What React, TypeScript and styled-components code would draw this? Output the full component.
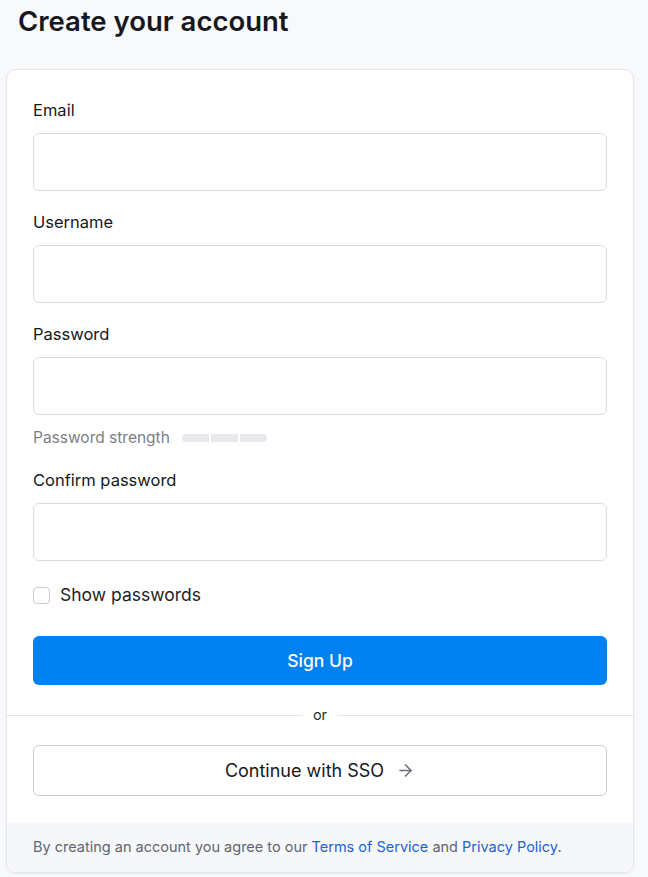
import React, { useState } from "react";
import styled, { createGlobalStyle } from "styled-components";

const GlobalStyle = createGlobalStyle`
  html, body {
    margin: 0;
    padding: 0;
    background: #f8f9fb;
    font-family: Inter, "Noto Sans", "Liberation Sans", sans-serif;
    color: #16181d;
  }
  * {
    box-sizing: border-box;
  }
`;

const Page = styled.div`
  padding: 3px 14px 6px 6px;
`;

const Title = styled.h1`
  margin: 0 0 30px 12px;
  font-size: 27.5px;
  line-height: 36px;
  font-weight: 600;
  color: #16181d;
`;

const Card = styled.div`
  background: #fff;
  border: 1px solid #e4e6ea;
  border-radius: 10px;
  box-shadow: 0 1px 3px rgba(16, 24, 40, 0.06);
  overflow: hidden;
`;

const Form = styled.form`
  display: flex;
  flex-direction: column;
  padding: 28px 26px 0 26px;
`;

const Field = styled.div`
  display: flex;
  flex-direction: column;
  margin-bottom: 19px;
`;

const Label = styled.label`
  font-size: 16.5px;
  line-height: 24px;
  font-weight: 400;
  color: #16181d;
  margin-bottom: 11px;
`;

const Input = styled.input`
  height: 58px;
  width: 100%;
  border: 1px solid #d8dbe0;
  border-radius: 6px;
  padding: 0 14px;
  font-size: 16px;
  font-family: inherit;
  background: #fff;
  outline: none;
`;

const Strength = styled.div`
  display: flex;
  align-items: center;
  gap: 12px;
  margin: 13px 0 1px;
  font-size: 15.5px;
  line-height: 20px;
  color: #7a8089;
`;

const Bars = styled.div`
  display: flex;
  gap: 2px;
  border-radius: 4px;
  overflow: hidden;
`;

const Bar = styled.span`
  width: 27px;
  height: 8px;
  background: #e6e8eb;
`;

const CheckRow = styled.label`
  display: flex;
  align-items: center;
  gap: 10px;
  margin-top: 4px;
  font-size: 17.5px;
  line-height: 22px;
  color: #1f2228;
  cursor: pointer;
`;

const Box = styled.span<{ $on: boolean }>`
  width: 17px;
  height: 17px;
  border: 1px solid #c6cad0;
  border-radius: 4px;
  background: ${(p) => (p.$on ? "#0081f1" : "#fff")};
`;

const Primary = styled.button`
  margin-top: 30px;
  height: 49px;
  border: none;
  border-radius: 6px;
  background: #0081f1;
  color: #fff;
  font-family: inherit;
  font-size: 17.5px;
  font-weight: 500;
  cursor: pointer;
`;

const Divider = styled.div`
  display: flex;
  align-items: center;
  gap: 10px;
  margin: 20px 0 20px 0;
  font-size: 14.5px;
  line-height: 20px;
  color: #2a2d33;

  &::before,
  &::after {
    content: "";
    flex: 1;
    height: 1px;
    background: #e2e4e8;
  }
`;

const SsoWrap = styled.div`
  padding: 0 26px 27px;
`;

const Secondary = styled.button`
  width: 100%;
  height: 51px;
  border: 1px solid #c9cdd3;
  border-radius: 6px;
  background: #fff;
  color: #16181d;
  font-family: inherit;
  font-size: 18px;
  font-weight: 400;
  display: flex;
  align-items: center;
  justify-content: center;
  gap: 12px;
  cursor: pointer;
`;

const Footer = styled.div`
  background: #f6f7f9;
  padding: 14px 26px 15px;
  font-size: 14.5px;
  line-height: 20px;
  color: #60666f;
`;

const A = styled.a`
  color: #1a62d6;
  text-decoration: none;
`;

const Arrow = () => (
  <svg width="19" height="19" viewBox="0 0 24 24" fill="none" stroke="#6b7078" strokeWidth="2" strokeLinecap="round" strokeLinejoin="round">
    <path d="M5 12h14" />
    <path d="M12 5l7 7-7 7" />
  </svg>
);

export default function App() {
  const [show, setShow] = useState(false);
  const type = show ? "text" : "password";
  return (
    <Page>
      <GlobalStyle />
      <Title>Create your account</Title>
      <Card>
        <Form onSubmit={(e) => e.preventDefault()}>
          <Field>
            <Label>Email</Label>
            <Input type="email" />
          </Field>
          <Field>
            <Label>Username</Label>
            <Input type="text" />
          </Field>
          <Field>
            <Label>Password</Label>
            <Input type={type} />
            <Strength>
              Password strength
              <Bars>
                <Bar />
                <Bar />
                <Bar />
              </Bars>
            </Strength>
          </Field>
          <Field>
            <Label>Confirm password</Label>
            <Input type={type} />
          </Field>
          <CheckRow onClick={() => setShow(!show)}>
            <Box $on={show} />
            Show passwords
          </CheckRow>
          <Primary type="submit">Sign Up</Primary>
        </Form>
        <Divider>or</Divider>
        <SsoWrap>
          <Secondary type="button">
            Continue with SSO <Arrow />
          </Secondary>
        </SsoWrap>
        <Footer>
          By creating an account you agree to our <A href="#">Terms of Service</A> and{" "}
          <A href="#">Privacy Policy</A>.
        </Footer>
      </Card>
    </Page>
  );
}
